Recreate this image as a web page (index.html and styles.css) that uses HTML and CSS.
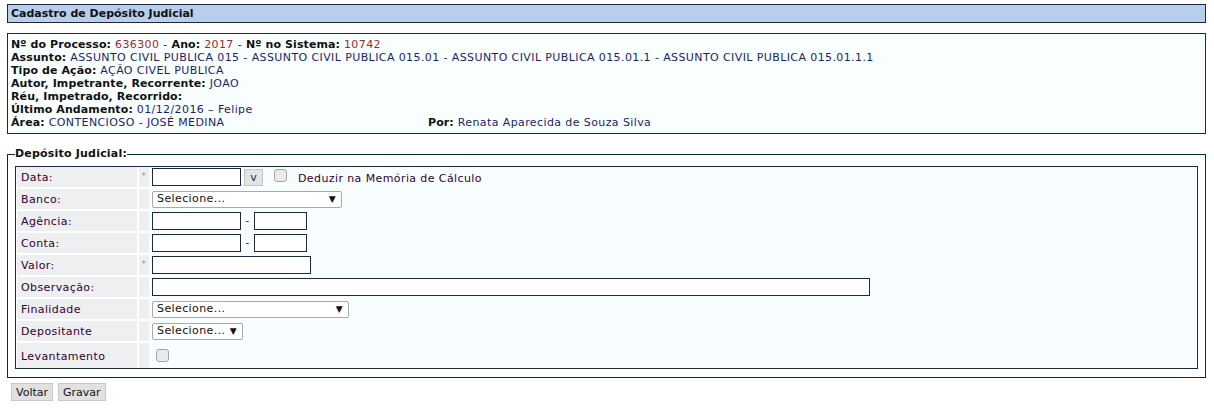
FILE: index.html
```html
<!DOCTYPE html>
<html>
<head>
    <title>Cadastro de Depósito Judicial</title>
    <link rel="stylesheet" href="styles.css">
</head>
<body>
    <div class="title-bar">Cadastro de Depósito Judicial</div>

    <div class="info-box">
        <div><b>Nº do Processo:</b> <span class="num">636300</span> - <b>Ano:</b> <span class="num">2017</span> - <b>Nº no Sistema:</b> <span class="num">10742</span></div>
        <div><b>Assunto:</b> <span class="val">ASSUNTO CIVIL PUBLICA 015 - ASSUNTO CIVIL PUBLICA 015.01 - ASSUNTO CIVIL PUBLICA 015.01.1 - ASSUNTO CIVIL PUBLICA 015.01.1.1</span></div>
        <div><b>Tipo de Ação:</b> <span class="val">AÇÃO CIVEL PUBLICA</span></div>
        <div><b>Autor, Impetrante, Recorrente:</b> <span class="val">JOAO</span></div>
        <div><b>Réu, Impetrado, Recorrido:</b></div>
        <div><b>Último Andamento:</b> <span class="val">01/12/2016 – Felipe</span></div>
        <div class="info-last">
            <span class="area"><b>Área:</b> <span class="val">CONTENCIOSO - JOSÉ MEDINA</span></span>
            <span><b>Por:</b> <span class="val">Renata Aparecida de Souza Silva</span></span>
        </div>
    </div>

    <fieldset class="deposito">
        <legend>Depósito Judicial:</legend>
        <table class="form-table">
            <tr>
                <td class="lbl">Data:</td>
                <td class="req">*</td>
                <td class="fld">
                    <div class="fld-row">
                        <input type="text" class="txt w-date">
                        <button type="button" class="btn-cal">v</button>
                        <input type="checkbox" class="chk chk-deduz">
                        <span class="chk-label">Deduzir na Memória de Cálculo</span>
                    </div>
                </td>
            </tr>
            <tr>
                <td class="lbl">Banco:</td>
                <td class="req"></td>
                <td class="fld"><div class="fld-row"><div class="sel w-banco">Selecione...<span class="arrow">▼</span></div></div></td>
            </tr>
            <tr>
                <td class="lbl">Agência:</td>
                <td class="req"></td>
                <td class="fld"><div class="fld-row"><input type="text" class="txt w-date"><span class="dash">-</span><input type="text" class="txt w-dig"></div></td>
            </tr>
            <tr>
                <td class="lbl">Conta:</td>
                <td class="req"></td>
                <td class="fld"><div class="fld-row"><input type="text" class="txt w-date"><span class="dash">-</span><input type="text" class="txt w-dig"></div></td>
            </tr>
            <tr>
                <td class="lbl">Valor:</td>
                <td class="req">*</td>
                <td class="fld"><div class="fld-row"><input type="text" class="txt w-valor"></div></td>
            </tr>
            <tr>
                <td class="lbl">Observação:</td>
                <td class="req"></td>
                <td class="fld"><div class="fld-row"><input type="text" class="txt w-obs"></div></td>
            </tr>
            <tr>
                <td class="lbl">Finalidade</td>
                <td class="req"></td>
                <td class="fld"><div class="fld-row"><div class="sel w-final">Selecione...<span class="arrow">▼</span></div></div></td>
            </tr>
            <tr>
                <td class="lbl">Depositante</td>
                <td class="req"></td>
                <td class="fld"><div class="fld-row"><div class="sel w-depos">Selecione...<span class="arrow">▼</span></div></div></td>
            </tr>
            <tr class="last-row">
                <td class="lbl">Levantamento</td>
                <td class="req"></td>
                <td class="fld"><div class="fld-row"><input type="checkbox" class="chk chk-lev"></div></td>
            </tr>
        </table>
    </fieldset>

    <div class="actions">
        <button type="button" class="btn">Voltar</button>
        <button type="button" class="btn">Gravar</button>
    </div>
</body>
</html>
```

FILE: styles.css
```css
body {
    font-family: "DejaVu Sans", Verdana, sans-serif;
    font-size: 11px;
    letter-spacing: 0.4px;
    margin: 0;
    padding: 4px 8px 0 7px;
    background-color: #fff;
    color: #1a1a2e;
}

b {
    letter-spacing: 0.1px;
}

.title-bar {
    background-color: #b8cfec;
    border: 1px solid #1b2a40;
    font-weight: bold;
    letter-spacing: 0;
    height: 17px;
    line-height: 17px;
    padding-left: 3px;
    color: #111;
}

.info-box {
    margin-top: 10px;
    border: 1px solid #1b2a40;
    background-color: #f9ffff;
    padding: 4px 3px 4px 3px;
    line-height: 13px;
}

.info-box b {
    color: #111;
}

.num {
    color: #9a2c2c;
}

.val {
    color: #1d1d6b;
}

.info-last {
    display: flex;
}

.info-last .area {
    width: 417px;
}

.deposito {
    margin: 13px 0 0 0;
    padding: 0 7px 8px 7px;
    border: 1px solid #003333;
}

.deposito legend {
    font-weight: bold;
    letter-spacing: 0.2px;
    padding: 0;
    color: #111;
    line-height: 14px;
}

.form-table {
    width: 100%;
    border: 1px solid #1b2a40;
    border-spacing: 0;
    background-color: #f8feff;
    margin-top: 5px;
}

.form-table td {
    height: 20px;
    padding: 0;
    line-height: 14px;
    border-bottom: 2px solid #fff;
}

.form-table .last-row td {
    height: 23px;
    border-bottom: none;
}

.form-table .lbl {
    width: 116px;
    background-color: #eeeff1;
    color: #330033;
    padding-left: 4px;
    padding-top: 2px;
    height: 18px;
    border-left: 1px solid #fff;
    border-right: 2px solid #fff;
}

.form-table .req {
    width: 10px;
    background-color: #eeeff1;
    color: #c89a3a;
    text-align: center;
    font-size: 9px;
    vertical-align: top;
    padding-top: 2px;
    height: 18px;
}

.form-table .fld {
    padding-left: 3px;
    border-bottom-color: #f8feff;
}

.fld-row {
    display: flex;
    align-items: center;
    height: 20px;
}

.txt {
    box-sizing: border-box;
    height: 18px;
    border: 1px solid #1b2a40;
    background-color: #fff;
    margin: 0;
    padding: 0 2px;
}

.w-date { width: 89px; }
.w-dig { width: 53px; }
.w-valor { width: 159px; }
.w-obs { width: 718px; }

.dash {
    display: inline-block;
    width: 13px;
    text-align: center;
    color: #333;
}

.btn-cal {
    box-sizing: border-box;
    width: 19px;
    height: 17px;
    margin: 0 0 0 3px;
    padding: 0;
    border: 1px solid #c4c4c4;
    background-color: #e4e4e4;
    color: #1d1d6b;
    font-family: "DejaVu Sans", Verdana, sans-serif;
    font-size: 11px;
}

.chk {
    appearance: none;
    box-sizing: border-box;
    width: 13px;
    height: 13px;
    border: 1px solid #a5a5a5;
    border-radius: 3px;
    background-color: #eaeaea;
    margin: 0;
}

.chk-deduz {
    margin-left: 11px;
    margin-top: -4px;
}

.chk-lev {
    margin-left: 4px;
}

.chk-label {
    margin-left: 11px;
    color: #330033;
    margin-top: 3px;
}

.sel {
    box-sizing: border-box;
    display: flex;
    justify-content: space-between;
    align-items: center;
    height: 17px;
    border: 1px solid #a9a9a9;
    border-radius: 2px;
    background-color: #fff;
    padding: 0 5px 0 4px;
    color: #111;
}

.sel .arrow {
    font-size: 9px;
}

.w-banco { width: 190px; }
.w-final { width: 197px; }
.w-depos { width: 91px; }

.actions {
    margin-top: 5px;
    padding-left: 4px;
}

.btn {
    font-family: "DejaVu Sans", Verdana, sans-serif;
    font-size: 11px;
    letter-spacing: 0;
    height: 18px;
    padding: 0 4px;
    margin-right: 1px;
    background-color: #e1e1e1;
    border: 1px solid #c8c8c8;
    color: #111;
}
```
